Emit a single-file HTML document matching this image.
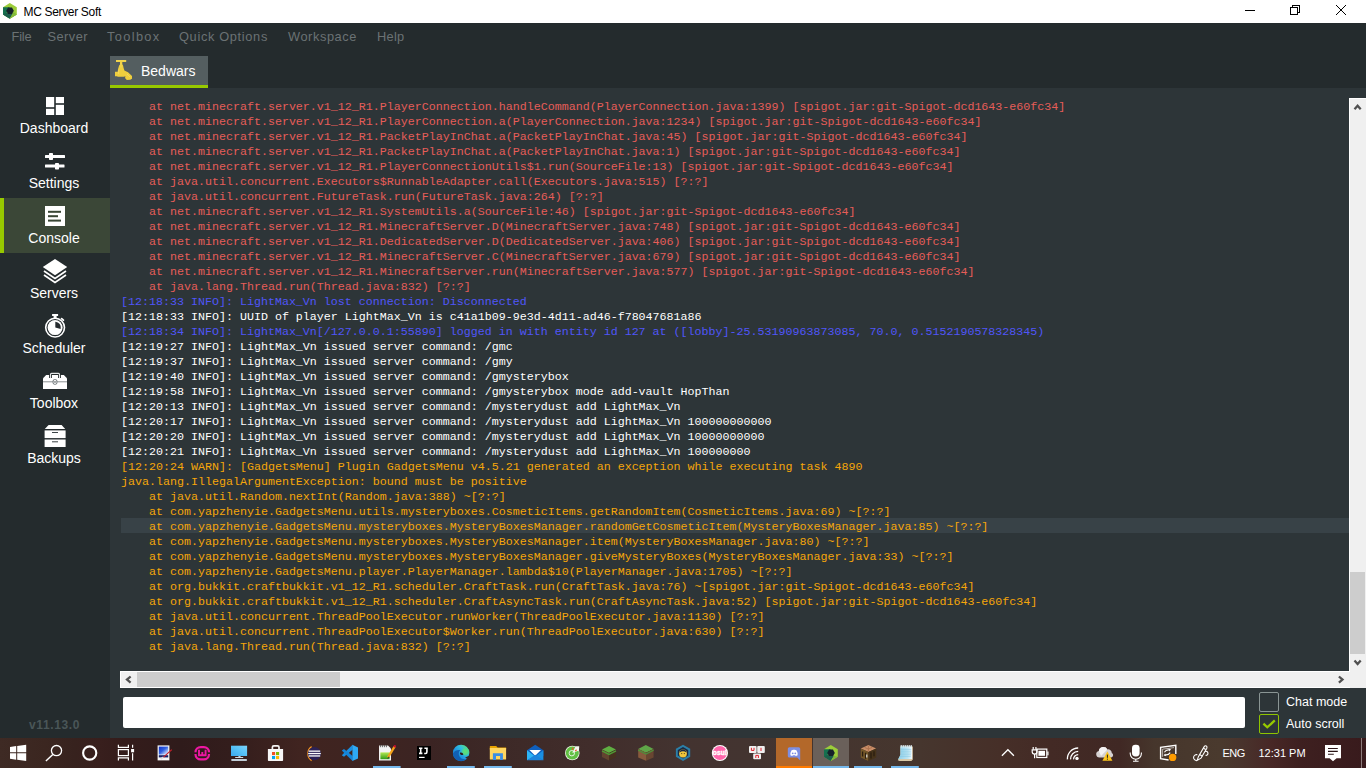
<!DOCTYPE html>
<html>
<head>
<meta charset="utf-8">
<title>MC Server Soft</title>
<style>
*{box-sizing:border-box;margin:0;padding:0}
html,body{width:1366px;height:768px;overflow:hidden;background:#242b2d;font-family:"Liberation Sans",sans-serif}
#root{position:relative;width:1366px;height:768px;overflow:hidden;background:#242b2d}
.abs{position:absolute}
/* title bar */
#titlebar{position:absolute;left:0;top:0;width:1366px;height:23px;background:#fff}
#title{position:absolute;left:23.5px;top:5px;font-size:12px;line-height:14px;color:#000;letter-spacing:-0.33px;white-space:nowrap}
/* menu */
#menubar{position:absolute;left:0;top:23px;width:1366px;height:27px;background:#242b2d}
.mi{position:absolute;top:6px;font-size:12.8px;line-height:15px;color:#6b7274;white-space:nowrap}
/* sidebar */
#sidebar{position:absolute;left:0;top:50px;width:110px;height:688px;background:#242b2d}
.sb{position:absolute;left:0;width:110px;height:55px}
.sb .lbl{position:absolute;left:0;width:108px;top:32px;text-align:center;font-size:14px;line-height:16px;color:#fff;white-space:nowrap}
.sb svg{position:absolute}
.sb.act{background:#3b4737}
.sb.act:before{content:"";position:absolute;left:0;top:0;width:4px;height:55px;background:#97c900}
#ver{position:absolute;left:29px;top:718px;font-size:12px;font-weight:bold;color:#4a5658;line-height:14px;letter-spacing:0.62px;white-space:nowrap}
/* tab */
#tab{position:absolute;left:110px;top:56px;width:98px;height:29px;background:#545e60}
#tabline{position:absolute;left:110px;top:85px;width:98px;height:3px;background:#97c900}
#tabtxt{position:absolute;left:141px;top:63px;font-size:14px;line-height:16px;color:#fff;white-space:nowrap}
/* console */
#panel{position:absolute;left:110px;top:88px;width:1256px;height:650px;background:#2d3538}
#con{position:absolute;left:121px;top:100px;width:1228px;height:573px;overflow:hidden;font-family:"Liberation Mono",monospace;font-size:11.6667px;line-height:15px;color:#fff}
#con div{height:15px;white-space:pre}
.r{color:#e65d58}.b{color:#5056f8}.w{color:#fff}.o{color:#f5a60a}
#hlbar{position:absolute;left:121px;top:518px;width:1228px;height:15px;background:#384247}
#vs{position:absolute;left:1349px;top:98px;width:17px;height:590px;background:#f0f0f0;border-left:1px solid #fff;border-top:1px solid #fff}
#hs{position:absolute;left:120px;top:671px;width:1230px;height:17px;background:#f0f0f0;border:1px solid #fff;border-right:none}
#vthumb{position:absolute;left:1350px;top:572px;width:15px;height:82px;background:#cdcdcd}
#hthumb{position:absolute;left:137px;top:672px;width:203px;height:15px;background:#cdcdcd}
/* input */
#cmd{position:absolute;left:123px;top:697px;width:1122px;height:31px;background:#fff;border-radius:2px}
.cb{position:absolute;left:1259px;width:20px;height:20px;border-radius:2px}
.cbl{position:absolute;left:1286px;font-size:12.5px;line-height:15px;color:#fff;white-space:nowrap}
/* taskbar */
.tt{position:absolute;top:8px;font-size:11px;line-height:14px;color:#fff;white-space:nowrap}
#taskbar{position:absolute;left:0;top:738px;width:1366px;height:30px;background:linear-gradient(90deg,#3e2a24 0.00%,#3b2620 3.29%,#37221e 5.49%,#381f1d 7.32%,#341c1b 9.15%,#2f1b1b 13.18%,#331d1c 16.84%,#402420 21.96%,#3e2421 27.82%,#3b2423 31.48%,#3d2927 36.60%,#412d2b 43.19%,#433330 49.78%,#433430 54.90%,#46362e 67.35%,#462f28 73.21%,#432a25 76.87%,#402824 81.99%,#46362c 84.48%,#4a3a2e 89.31%,#49342d 90.78%,#482826 92.97%,#3e2020 95.17%,#381a1c 100.00%)}
</style>
</head>
<body>
<div id="root">
<div id="titlebar">
<svg class="abs" style="left:0;top:0" width="24" height="23" viewBox="0 0 24 23">
<polygon points="9.8,3 16.8,7.2 16.8,14.6 9.8,18.8 3,14.6 3,7.2" fill="#9ccd3a"/>
<polygon points="3,7.2 9.8,7.2 6,14 9.8,18.8 3,14.6" fill="#15704f"/>
<polygon points="3,14.6 6.2,13 13,13.6 9.8,18.8" fill="#1c5f4c"/>
<polygon points="9.8,18.8 13.4,12 16.8,14.6" fill="#7fb83c"/>
<polygon points="9.8,18.8 13,13.6 16.8,14.6 16.8,14.6" fill="#84bb3c"/>
<polygon points="8,7.4 12,7.4 13.8,10.8 12,14 8,14 6.2,10.8" fill="#15222b"/>
</svg>
<svg class="abs" style="left:1226px;top:0" width="140" height="23" viewBox="0 0 140 23" fill="none" stroke="#000" stroke-width="1" shape-rendering="crispEdges">
<path d="M19 10.5H29"/>
<path d="M64.5 7.5h7v7h-7z M66.5 7.5v-2h7v7h-2"/>
</svg>
<svg class="abs" style="left:1326px;top:0" width="40" height="23" viewBox="0 0 40 23" fill="none" stroke="#000" stroke-width="1">
<path d="M10 5L20 15M20 5L10 15"/>
</svg>
</div>
<div id="title">MC Server Soft</div>
<div id="menubar">
<span class="mi" style="left:11.5px;letter-spacing:-0.15px">File</span>
<span class="mi" style="left:47.5px;letter-spacing:0.47px">Server</span>
<span class="mi" style="left:107px;letter-spacing:1.350px">Toolbox</span>
<span class="mi" style="left:179px;letter-spacing:0.66px">Quick Options</span>
<span class="mi" style="left:288px;letter-spacing:0.58px">Workspace</span>
<span class="mi" style="left:377px;letter-spacing:0.3px">Help</span>
</div>
<div id="sidebar">
<div class="sb" style="top:38px"><svg style="left:46px;top:9px" width="18" height="18" viewBox="0 0 18 18" fill="#fff"><rect x="0" y="0" width="8.200" height="10.200"/><rect x="0" y="11.800" width="8.200" height="6.200"/><rect x="9.800" y="0" width="8.200" height="6.200"/><rect x="9.800" y="7.800" width="8.200" height="10.200"/></svg><div class="lbl">Dashboard</div></div>
<div class="sb" style="top:93px"><svg style="left:44px;top:8px" width="24" height="20" viewBox="0 0 24 20" fill="#fff"><rect x="1" y="4" width="20" height="3" rx="0.5"/><rect x="5" y="2" width="4" height="7" rx="0.7"/><rect x="1" y="13.5" width="19.5" height="3" rx="0.5"/><rect x="11" y="12" width="4" height="6.4" rx="0.7"/></svg><div class="lbl">Settings</div></div>
<div class="sb act" style="top:148px"><svg style="left:45px;top:8px" width="20" height="20" viewBox="0 0 20 20"><rect width="20" height="20" fill="#fff"/><rect x="3" y="4.8" width="13" height="2" fill="#394634"/><rect x="3" y="9.2" width="10" height="2" fill="#394634"/><rect x="3" y="13.6" width="13" height="2" fill="#394634"/></svg><div class="lbl">Console</div></div>
<div class="sb" style="top:203px"><svg style="left:42px;top:5px" width="26" height="26" viewBox="0 0 26 26"><polygon points="13,1 25.2,9 13,17.2 0.8,9" fill="#fff"/><path d="M2 13L13 20.4L24 13M2 17L13 24.4L24 17" fill="none" stroke="#fff" stroke-width="1.7"/></svg><div class="lbl">Servers</div></div>
<div class="sb" style="top:258px"><svg style="left:43px;top:5px" width="24" height="27" viewBox="0 0 24 27"><circle cx="12.1" cy="14.6" r="9.4" fill="none" stroke="#fff" stroke-width="1.6"/><circle cx="12.1" cy="14.6" r="7.5" fill="#fff"/><path d="M12.3 14.4V8.8A5.8 5.8 0 0 1 17.7 16Z" fill="#252b2e"/><rect x="9.1" y="1" width="6" height="2" fill="#fff"/><rect x="10.6" y="1" width="3" height="4.4" fill="#fff"/><path d="M18.6 5.6L20.4 7.2" stroke="#fff" stroke-width="1.8" stroke-linecap="round"/></svg><div class="lbl">Scheduler</div></div>
<div class="sb" style="top:313px"><svg style="left:42px;top:8px" width="26" height="20" viewBox="0 0 26 20"><path d="M4.200 4h17.600L25 7.200V18H1V7.200Z" fill="#fff"/><path d="M8.500 7V3.400Q8.500 2.400 9.500 2.400H16.500Q17.500 2.400 17.500 3.400V7" fill="none" stroke="#242b2d" stroke-width="2.800"/><path d="M8.500 7.200V3.400Q8.500 2.400 9.500 2.400H16.500Q17.500 2.400 17.500 3.400V7.200" fill="none" stroke="#e4e7e7" stroke-width="1.100"/><rect x="1" y="10.300" width="24" height="1" fill="#8a9092"/><rect x="11.100" y="8.500" width="3.800" height="4.800" rx="1.500" fill="#fff" stroke="#6e7577" stroke-width="1"/><rect x="12.500" y="9.900" width="1" height="2" fill="#4a5254"/></svg><div class="lbl">Toolbox</div></div>
<div class="sb" style="top:368px"><svg style="left:43px;top:5px" width="24" height="26" viewBox="0 0 24 26"><polygon points="5.6,1.9 18.6,1.9 22.2,6 1.8,6" fill="#fff"/><rect x="1.6" y="7.4" width="21" height="7.7" fill="#fff"/><rect x="1.6" y="16.5" width="21" height="7.5" fill="#fff"/><rect x="9" y="9" width="6" height="1" fill="#3c4447"/><rect x="9" y="18.3" width="6" height="1" fill="#3c4447"/></svg><div class="lbl">Backups</div></div>
</div>
<div id="ver">v11.13.0</div>
<div id="tab"><svg class="abs" style="left:0;top:0" width="30" height="29" viewBox="0 0 30 29"><path d="M6 4h10.2v2.1h-3.9v2.2l.7 1 .6 2.7.8 2.4 3.6 1.8 4 3.8v2.7l-1.8 1-3.4.3-1.8-2 .5-1.6-1-.1v.5h-6.5l-1.2-.5h-1.8v-4.5h2.7l.3-2.6 1.1-3.8.9-1v-2.3H6z" fill="#efcf3e"/><path d="M6.2 4.9h9.8M11 6.5v5M8.8 14l-.4 4M17 18l3 3" stroke="#f7e488" stroke-width="0.8" fill="none" opacity="0.55"/></svg></div><div id="tabline"></div><div id="tabtxt">Bedwars</div>
<div id="panel"></div>
<div id="hlbar"></div>
<div id="con">
<div class="r">    at net.minecraft.server.v1_12_R1.PlayerConnection.handleCommand(PlayerConnection.java:1399) [spigot.jar:git-Spigot-dcd1643-e60fc34]</div>
<div class="r">    at net.minecraft.server.v1_12_R1.PlayerConnection.a(PlayerConnection.java:1234) [spigot.jar:git-Spigot-dcd1643-e60fc34]</div>
<div class="r">    at net.minecraft.server.v1_12_R1.PacketPlayInChat.a(PacketPlayInChat.java:45) [spigot.jar:git-Spigot-dcd1643-e60fc34]</div>
<div class="r">    at net.minecraft.server.v1_12_R1.PacketPlayInChat.a(PacketPlayInChat.java:1) [spigot.jar:git-Spigot-dcd1643-e60fc34]</div>
<div class="r">    at net.minecraft.server.v1_12_R1.PlayerConnectionUtils$1.run(SourceFile:13) [spigot.jar:git-Spigot-dcd1643-e60fc34]</div>
<div class="r">    at java.util.concurrent.Executors$RunnableAdapter.call(Executors.java:515) [?:?]</div>
<div class="r">    at java.util.concurrent.FutureTask.run(FutureTask.java:264) [?:?]</div>
<div class="r">    at net.minecraft.server.v1_12_R1.SystemUtils.a(SourceFile:46) [spigot.jar:git-Spigot-dcd1643-e60fc34]</div>
<div class="r">    at net.minecraft.server.v1_12_R1.MinecraftServer.D(MinecraftServer.java:748) [spigot.jar:git-Spigot-dcd1643-e60fc34]</div>
<div class="r">    at net.minecraft.server.v1_12_R1.DedicatedServer.D(DedicatedServer.java:406) [spigot.jar:git-Spigot-dcd1643-e60fc34]</div>
<div class="r">    at net.minecraft.server.v1_12_R1.MinecraftServer.C(MinecraftServer.java:679) [spigot.jar:git-Spigot-dcd1643-e60fc34]</div>
<div class="r">    at net.minecraft.server.v1_12_R1.MinecraftServer.run(MinecraftServer.java:577) [spigot.jar:git-Spigot-dcd1643-e60fc34]</div>
<div class="r">    at java.lang.Thread.run(Thread.java:832) [?:?]</div>
<div class="b">[12:18:33 INFO]: LightMax_Vn lost connection: Disconnected</div>
<div class="w">[12:18:33 INFO]: UUID of player LightMax_Vn is c41a1b09-9e3d-4d11-ad46-f78047681a86</div>
<div class="b">[12:18:34 INFO]: LightMax_Vn[/127.0.0.1:55890] logged in with entity id 127 at ([lobby]-25.53190963873085, 70.0, 0.5152190578328345)</div>
<div class="w">[12:19:27 INFO]: LightMax_Vn issued server command: /gmc</div>
<div class="w">[12:19:37 INFO]: LightMax_Vn issued server command: /gmy</div>
<div class="w">[12:19:40 INFO]: LightMax_Vn issued server command: /gmysterybox</div>
<div class="w">[12:19:58 INFO]: LightMax_Vn issued server command: /gmysterybox mode add-vault HopThan</div>
<div class="w">[12:20:13 INFO]: LightMax_Vn issued server command: /mysterydust add LightMax_Vn</div>
<div class="w">[12:20:17 INFO]: LightMax_Vn issued server command: /mysterydust add LightMax_Vn 100000000000</div>
<div class="w">[12:20:20 INFO]: LightMax_Vn issued server command: /mysterydust add LightMax_Vn 10000000000</div>
<div class="w">[12:20:21 INFO]: LightMax_Vn issued server command: /mysterydust add LightMax_Vn 100000000</div>
<div class="o">[12:20:24 WARN]: [GadgetsMenu] Plugin GadgetsMenu v4.5.21 generated an exception while executing task 4890</div>
<div class="o">java.lang.IllegalArgumentException: bound must be positive</div>
<div class="o">    at java.util.Random.nextInt(Random.java:388) ~[?:?]</div>
<div class="o">    at com.yapzhenyie.GadgetsMenu.utils.mysteryboxes.CosmeticItems.getRandomItem(CosmeticItems.java:69) ~[?:?]</div>
<div class="o hl">    at com.yapzhenyie.GadgetsMenu.mysteryboxes.MysteryBoxesManager.randomGetCosmeticItem(MysteryBoxesManager.java:85) ~[?:?]</div>
<div class="o">    at com.yapzhenyie.GadgetsMenu.mysteryboxes.MysteryBoxesManager.item(MysteryBoxesManager.java:80) ~[?:?]</div>
<div class="o">    at com.yapzhenyie.GadgetsMenu.mysteryboxes.MysteryBoxesManager.giveMysteryBoxes(MysteryBoxesManager.java:33) ~[?:?]</div>
<div class="o">    at com.yapzhenyie.GadgetsMenu.player.PlayerManager.lambda$10(PlayerManager.java:1705) ~[?:?]</div>
<div class="o">    at org.bukkit.craftbukkit.v1_12_R1.scheduler.CraftTask.run(CraftTask.java:76) ~[spigot.jar:git-Spigot-dcd1643-e60fc34]</div>
<div class="o">    at org.bukkit.craftbukkit.v1_12_R1.scheduler.CraftAsyncTask.run(CraftAsyncTask.java:52) [spigot.jar:git-Spigot-dcd1643-e60fc34]</div>
<div class="o">    at java.util.concurrent.ThreadPoolExecutor.runWorker(ThreadPoolExecutor.java:1130) [?:?]</div>
<div class="o">    at java.util.concurrent.ThreadPoolExecutor$Worker.run(ThreadPoolExecutor.java:630) [?:?]</div>
<div class="o">    at java.lang.Thread.run(Thread.java:832) [?:?]</div>
</div>
<div id="vs"></div><div id="hs"></div><div id="vthumb"></div><div id="hthumb"></div>
<svg class="abs" style="left:1349px;top:98px" width="17" height="17" viewBox="0 0 17 17"><path d="M5.500 11.200L8.600 7.700L11.700 11.200" fill="none" stroke="#505050" stroke-width="2.300"/></svg>
<svg class="abs" style="left:1349px;top:654px" width="17" height="17" viewBox="0 0 17 17"><path d="M5.500 6.600L8.600 10.100L11.700 6.600" fill="none" stroke="#505050" stroke-width="2.300"/></svg>
<svg class="abs" style="left:120px;top:671px" width="17" height="17" viewBox="0 0 17 17"><path d="M10.600 5.500L7 8.600L10.600 11.700" fill="none" stroke="#505050" stroke-width="2.300"/></svg>
<svg class="abs" style="left:1332px;top:671px" width="17" height="17" viewBox="0 0 17 17"><path d="M6.900 5.500L10.500 8.600L6.900 11.700" fill="none" stroke="#505050" stroke-width="2.300"/></svg>
<div class="cb" style="top:692px;border:1px solid #8a9594"></div>
<div class="cb" style="top:714px;border:1.5px solid #8fc400"><svg class="abs" style="left:-1.5px;top:-1.5px" width="20" height="20" viewBox="0 0 20 20"><path d="M4.400 9.600L8.300 13.300L15.800 6.400" fill="none" stroke="#97c900" stroke-width="2.300"/></svg></div>
<div class="cbl" style="top:695px">Chat mode</div>
<div class="cbl" style="top:717px">Auto scroll</div>
<div id="cmd"></div>
<div id="taskbar">
<svg class="abs" style="left:0;top:0" width="1366" height="30" viewBox="0 738 1366 30">
<defs>
<linearGradient id="gEdge" x1="0" y1="1" x2="1" y2="0"><stop offset="0" stop-color="#1273cc"/><stop offset="0.400" stop-color="#1f95e0"/><stop offset="0.650" stop-color="#30bde0"/><stop offset="0.850" stop-color="#52d98c"/><stop offset="1" stop-color="#6be060"/></linearGradient>
<linearGradient id="gPaint" x1="0" y1="0" x2="1" y2="1"><stop offset="0" stop-color="#1030c8"/><stop offset="0.450" stop-color="#2f5fe0"/><stop offset="0.800" stop-color="#b8cdf8"/><stop offset="1" stop-color="#e8f0ff"/></linearGradient>
<linearGradient id="gMon" x1="0" y1="1" x2="1" y2="0"><stop offset="0" stop-color="#3aa8ee"/><stop offset="0.5" stop-color="#55c1f7"/><stop offset="1" stop-color="#7ad3fb"/></linearGradient>
<linearGradient id="gNpp" x1="0" y1="0" x2="0" y2="1"><stop offset="0" stop-color="#b5e853"/><stop offset="1" stop-color="#2f9a14"/></linearGradient>
<linearGradient id="gMail" x1="0" y1="0" x2="1" y2="1"><stop offset="0" stop-color="#35c0f8"/><stop offset="1" stop-color="#0f73d0"/></linearGradient>
<linearGradient id="gNote" x1="0" y1="0" x2="1" y2="0"><stop offset="0" stop-color="#8fd0ea"/><stop offset="0.7" stop-color="#bfe6f5"/><stop offset="1" stop-color="#f4fbff"/></linearGradient>
<radialGradient id="gEdgeG"><stop offset="0" stop-color="#62e070"/><stop offset="0.600" stop-color="#55dc80" stop-opacity="0.850"/><stop offset="1" stop-color="#40cfa8" stop-opacity="0"/></radialGradient>
</defs>
<!-- highlighted buttons -->
<rect x="776" y="738" width="36" height="30" fill="#b3682a"/>
<rect x="776" y="766" width="36" height="2" fill="#ff7b00"/>
<rect x="813" y="738" width="36" height="30" fill="#6a605a"/>
<g fill="#76b9ed">
<rect x="373" y="766" width="27.6" height="2"/><rect x="447" y="766" width="27.8" height="2"/><rect x="484" y="766" width="27.8" height="2"/>
<rect x="813" y="766" width="36" height="2"/><rect x="854" y="766" width="28" height="2"/><rect x="891" y="766" width="27.8" height="2"/>
</g>
<!-- start -->
<g fill="#fff">
<polygon points="10,747 16.2,746.1 16.2,752.3 10,752.3"/><polygon points="17.2,746 26.2,744.7 26.2,752.3 17.2,752.3"/>
<polygon points="10,753.3 16.2,753.3 16.2,759.7 10,758.8"/><polygon points="17.2,753.3 26.2,753.3 26.2,761.1 17.2,759.8"/>
</g>
<!-- search -->
<circle cx="56.5" cy="750.6" r="5.1" fill="none" stroke="#fff" stroke-width="1.3"/><path d="M52.8 754.4L45.9 761" stroke="#fff" stroke-width="1.4" fill="none"/>
<!-- cortana -->
<circle cx="89.7" cy="753" r="6.6" fill="none" stroke="#fff" stroke-width="2.1"/>
<!-- task view -->
<g fill="none" stroke="#fff" stroke-width="1.200"><rect x="118.400" y="749.600" width="10" height="6"/><path d="M118.400 744.800V747.400H128.400V744.800M118.400 760.400V757.800H128.400V760.400M132.600 744.800V747.800M132.600 753.200V760.400"/></g><rect x="131.100" y="749" width="3" height="3.300" fill="#fff"/>
<!-- paint -->
<rect x="157.600" y="745.400" width="11.800" height="15" fill="#f6f6f6"/><rect x="158.800" y="746.600" width="9.400" height="8" fill="url(#gPaint)"/><rect x="158.800" y="755.200" width="9.400" height="2.200" fill="#14206a"/><path d="M171.800 749.600L163 757.600" stroke="#c8202c" stroke-width="1.200"/><path d="M163.400 757.200L160.600 759.200" stroke="#ddd" stroke-width="1.600"/>
<!-- wamp -->
<rect x="195.500" y="747.100" width="13.500" height="12.300" rx="5.200" fill="none" stroke="#ee17a3" stroke-width="2.200"/><rect x="193.800" y="752.300" width="3.400" height="1.700" fill="#2f1b1b"/><rect x="207.400" y="752.300" width="3.400" height="1.700" fill="#311c1c"/><path d="M199 749.800v5.400h6.600v-5.400M202.300 752v3" fill="none" stroke="#ee17a3" stroke-width="1.900"/>
<!-- monitor -->
<rect x="231" y="745.700" width="16.100" height="10.300" fill="url(#gMon)"/><rect x="238.400" y="756" width="2.200" height="1.400" fill="#c4d0d8"/><rect x="235.200" y="757" width="8" height="1" fill="#d5dde2"/><rect x="231.200" y="759" width="15.800" height="2" rx="0.800" fill="#c2ced8"/>
<!-- store -->
<path d="M272.400 749.600v-2.400q0-1.400 1.400-1.400h3.800q1.400 0 1.400 1.400v2.400" fill="none" stroke="#f4f4f4" stroke-width="1.700"/><path d="M267.900 748.900h15.200v11.300q0 .8-.8.800h-13.600q-.8 0-.8-.8z" fill="#f7f7f7"/><rect x="272" y="752" width="3.100" height="3.100" fill="#f25022"/><rect x="276" y="752" width="3.100" height="3.100" fill="#7fba00"/><rect x="272" y="756" width="3.100" height="3.100" fill="#00a4ef"/><rect x="276" y="756" width="3.100" height="3.100" fill="#ffb900"/>
<!-- eclipse -->
<path d="M311.6 746.6a8.4 8.4 0 0 0 0 14" fill="none" stroke="#f7941e" stroke-width="1.3"/><circle cx="314.4" cy="753.6" r="6.6" fill="#2c2255"/><g fill="#fff"><rect x="308.6" y="750.5" width="11.6" height="1.3"/><rect x="308.2" y="752.9" width="12.6" height="1.3"/><rect x="308.6" y="755.3" width="11.6" height="1.3"/></g>
<!-- vscode -->
<polygon points="352.600,744.800 352.600,749.800 344,756.800 341.800,755.200" fill="#1b8ee0"/><polygon points="352.600,761 352.600,756 344,749 341.800,750.600" fill="#1484d8"/><polygon points="352.400,744.800 358,747.400 358,758.400 352.400,761" fill="#2ea9f4"/>
<!-- notepad++ -->
<path d="M379 745.6h9l3 3V760.6h-12z" fill="#f2f2f2"/><path d="M380.4 745v2.2M382.4 745v2.2M384.4 745v2.2M386.4 745v2.2" stroke="#555" stroke-width="0.9"/><rect x="380.4" y="752.4" width="9.2" height="6.8" fill="url(#gNpp)"/><path d="M394.6 746.6L388 757.4" stroke="#f5a21a" stroke-width="2.3"/><circle cx="394.8" cy="746.2" r="1.2" fill="#c8102e"/><path d="M388.6 756.4L387.2 759L389.6 757.6Z" fill="#333"/>
<!-- intellij -->
<rect x="417" y="746" width="14" height="14" fill="#000"/><path d="M419 748.2h3.4M420.7 748.2v5.2M419 753.4h3.4M424.4 748.2h3.4M426.9 748.2v3.8q0 1.5-1.4 1.5h-1.3" fill="none" stroke="#fff" stroke-width="1.600"/><rect x="419" y="756.800" width="5.600" height="1.200" fill="#fff"/>
<!-- edge -->
<circle cx="461.100" cy="752.900" r="8.200" fill="url(#gEdge)"/><circle cx="465.300" cy="751.800" r="4.600" fill="url(#gEdgeG)"/><path d="M452.900 753.400a8.200 8.200 0 0 0 13.600 5.700q-4.600 1-6.800-2.400t.6-6.600q-5.200-.4-7.400 3.300z" fill="#1160b4"/><path d="M460.200 752.600a1.700 1.700 0 0 0 1.200 2.400q1.200.2 2-.6-.6-2.200-3.200-1.800z" fill="#2e1c1c"/><path d="M469.400 755.600l-4.200 1.800q1.400 1.600 3 1.200a8.200 8.200 0 0 0 1.200-3z" fill="#3c2726"/>
<!-- explorer -->
<path d="M489.800 746.600q0-.6.600-.6h5.800l1.400 1.600h8.500v2h-16.300z" fill="#e9a400"/><rect x="489.800" y="747.900" width="16.300" height="11.500" rx="0.500" fill="#ffd661"/><path d="M492.900 753.200h10v6.800h-2.800v-4h-4.100v4h-3.100z" fill="#3a8ee6"/>
<!-- mail -->
<path d="M527 750.200L535.200 744.800L543.400 750.200V756H527z" fill="#0f5fbd"/><path d="M529.400 750h11.600l-5.800 5.800z" fill="#fff"/><path d="M527 750.200L535.200 756.400L527 760.200z" fill="#2db5f6"/><path d="M543.400 750.200L535.200 756.400L543.400 760.200z" fill="#1a8fe3"/><path d="M527 760.200L535.200 754.800L543.400 760.200z" fill="#1c84dc"/>
<!-- coccoc -->
<circle cx="572.300" cy="753" r="7.300" fill="#e6efe0"/><circle cx="572.300" cy="753" r="6.500" fill="#62c043"/><path d="M572.300 753L575.600 746.200L579.200 746.200L579 750.400Z" fill="#f2f6ee"/><circle cx="571.800" cy="753.200" r="2.700" fill="none" stroke="#f2f6ee" stroke-width="0.900"/><path d="M573 747.600l-.6 2.200M576.600 749.800l-1.400 1.200" stroke="#f0502a" stroke-width="1.200"/>
<!-- grass 1 -->
<polygon points="609,746 616,749.400 609,753 602,749.400" fill="#5fae42"/><polygon points="602,749.400 609,753 609,760.600 602,757" fill="#62442f"/><polygon points="609,753 616,749.400 616,757 609,760.600" fill="#46301f"/><path d="M602 750.800l7 3.600l7-3.600" fill="none" stroke="#4f9a35" stroke-width="1.400"/>
<!-- grass 2 -->
<polygon points="638.200,749 645.800,745 653.600,749 646,752.800" fill="#5fa648"/><polygon points="638.200,749 646,752.800 646,760.800 638.200,757.400" fill="#875a3c"/><polygon points="646,752.800 653.600,749 653.600,757.400 646,760.800" fill="#694631"/><path d="M638.200 750.200l7.800 3.800l7.600-3.800" fill="none" stroke="#4f8c3a" stroke-width="1.300"/>
<!-- hex badge -->
<polygon points="683,744.700 690.200,748.800 690.200,756.800 683,760.900 675.900,756.800 675.900,748.800" fill="#2b7fa8"/><polygon points="683,747 688.200,750 688.200,755.600 683,758.600 677.800,755.600 677.800,750" fill="#1a2a44"/><circle cx="683" cy="753.500" r="3.900" fill="#f0c63c"/><path d="M679.500 752.600q.4-3 3.500-3t3.500 3q-1.600-1.400-3.500-1.400t-3.500 1.400z" fill="#1a2a44"/><rect x="681.200" y="753" width="1" height="1.100" fill="#5a4a20"/><rect x="683.800" y="753" width="1" height="1.100" fill="#5a4a20"/>
<!-- osu -->
<circle cx="719.900" cy="753" r="8.100" fill="#fff"/><circle cx="719.900" cy="753" r="7" fill="#ff66ab"/>
<text x="719.900" y="755.300" font-family="Liberation Sans, sans-serif" font-size="6.700" font-weight="bold" fill="#fff" stroke="#fff" stroke-width="0.350" text-anchor="middle">osu!</text>
<!-- unikey -->
<g fill="#f0f0f0"><rect x="749" y="746" width="7.600" height="7" rx="1"/><rect x="757.200" y="746" width="7.600" height="7" rx="1"/><rect x="753.200" y="753.400" width="7.800" height="5.800" rx="1"/></g><g fill="none" stroke="#e0202a" stroke-width="1"><path d="M751.400 747.800v2.600h2.600v-2.600M761 747.800v3.200M755.800 758v-2.600h2.600v2.600"/></g>
<!-- discord -->
<path d="M789.400 747.200h9.200q1.600 0 1.600 1.600v11.600l-3-2.800h-7.800q-1.600 0-1.600-1.600v-7.200q0-1.600 1.600-1.600z" fill="#7d8ee2"/><path d="M790.400 755.200q-.2-3 1.200-5q1.200-.6 2.400-.4q1.200-.2 2.400.4q1.400 2 1.200 5q-1 .8-2 .8l-.4-.8h-2.400l-.4.800q-1 0-2-.8z" fill="#fff"/><circle cx="792.700" cy="753.300" r="0.900" fill="#7d8ee2"/><circle cx="795.300" cy="753.300" r="0.900" fill="#7d8ee2"/>
<!-- mcss -->
<g transform="translate(821,742.100)"><polygon points="9.800,3 16.800,7.200 16.800,14.600 9.800,18.800 3,14.600 3,7.200" fill="#9ccd3a"/><polygon points="3,7.200 9.800,7.200 6,14 9.800,18.800 3,14.600" fill="#15704f"/><polygon points="3,14.600 6.200,13 13,13.600 9.800,18.800" fill="#1c5f4c"/><polygon points="9.800,18.800 13,13.600 16.800,14.600" fill="#7fb83c"/><polygon points="8,7.400 12,7.400 13.800,10.800 12,14 8,14 6.200,10.800" fill="#15222b"/></g>
<!-- crafting table -->
<polygon points="868.400,745 876.200,748.400 868.400,752 860.800,748.400" fill="#c98e68"/><polygon points="860.800,748.400 868.400,752 868.400,761 860.800,757.400" fill="#75582a"/><polygon points="868.400,752 876.200,748.400 876.200,757.400 868.400,761" fill="#46331a"/><path d="M862.600 751.400v5M865.600 752.800v6M871 752.600v6M874 751.200v5" stroke="#2c1e10" stroke-width="1.300"/><path d="M866.800 754.400v3.200" stroke="#e8e8e8" stroke-width="1.100"/><path d="M864.600 747.400l3.800 1.700 3.800-1.700M868.400 745.800v5" fill="none" stroke="#a86c48" stroke-width="0.800"/>
<!-- notepad -->
<path d="M900.400 746.400h12.400v13l-1.400 1.600h-11.800l-1.800-.8 2.600-5z" fill="#d9c9a8"/><path d="M900.400 746.400h11.600v12.600h-11.400l-2.600.4 2.400-4.600z" fill="url(#gNote)"/><path d="M901.200 745v2.400M903.200 745v2.400M905.200 745v2.400M907.200 745v2.400M909.200 745v2.400M911.200 745v2.400" stroke="#e4f4fa" stroke-width="1.100"/><path d="M900.800 749.400h10.400M900.800 751.200h10.400M900.800 753h10.400M900.600 754.800h10.400M900 756.600h10.800" stroke="#7cc4de" stroke-width="0.500"/>
<!-- tray chevron -->
<path d="M1001.900 755.700L1007.900 749.700L1013.900 755.700" fill="none" stroke="#fff" stroke-width="1.300"/>
<!-- battery -->
<g fill="none" stroke="#fff" stroke-width="1.200"><path d="M1033.200 747v2.600M1035.900 747v2.600"/><path d="M1032.200 749.900h4.800v1.800a2.400 2.400 0 0 1-4.800 0z"/><path d="M1034.600 754v4.200"/><rect x="1036.800" y="749.100" width="10" height="8.400"/></g><rect x="1047.300" y="751.500" width="1.200" height="3.800" fill="#fff"/><rect x="1038.400" y="750.800" width="6.600" height="5" fill="#fff"/>
<!-- wifi -->
<g fill="none" stroke="#fff" stroke-width="1.300"><path d="M1067.400 759.400a10.800 10.800 0 0 1 10.800-11.400" /><path d="M1070.600 759.400a7.600 7.600 0 0 1 7.600-8" /><path d="M1073.600 759.400a4.600 4.600 0 0 1 4.600-4.800"/></g><circle cx="1077" cy="758.400" r="1.700" fill="#fff"/>
<!-- onedrive -->
<path d="M1099.400 757.600a3.400 3.400 0 0 1-.6-6.700a4.600 4.600 0 0 1 8.600-1.500a3.700 3.700 0 0 1 4.400 3.700a2.400 2.400 0 0 1-.6 4.500z" fill="#d6d2d2"/><path d="M1098.800 750.900a4.600 4.600 0 0 1 8.600-1.500l-6.400 6.600z" fill="#f4f2f2"/><path d="M1107.400 751.600l5 9.200h-10z" fill="#fcc41c"/><rect x="1106.900" y="754.600" width="1" height="3.200" fill="#222"/><rect x="1106.900" y="758.600" width="1" height="1.100" fill="#222"/>
<!-- mic -->
<rect x="1132" y="744.800" width="7.600" height="11.600" rx="3.400" fill="#fff"/><path d="M1130.200 752.600v1a5.600 5.600 0 0 0 11.200 0v-1M1135.800 759.200v1.800M1133 761.200h5.600" fill="none" stroke="#fff" stroke-width="1.100"/>
<!-- display -->
<g fill="none" stroke="#fff" stroke-width="1.400"><path d="M1175.800 754V745.200L1160.600 747.400V758.600L1168.600 760"/><path d="M1174 747.600L1162.600 749.200V756.800" stroke-width="0.600"/><path d="M1164.400 752.200q1.800-2.800 5-2.200M1170.200 752.600q-1.800 2.800-5 2.200" stroke-width="1.100"/></g><path d="M1168.400 748.600l2.600.6-1.600 2.200zM1166.200 756.200l-2.600-.6 1.600-2.200z" fill="#fff"/><circle cx="1172.600" cy="757.400" r="3.700" fill="#ff9c00"/>
<!-- pen -->
<g fill="none" stroke="#fff" stroke-width="1.100"><path d="M1197.200 760.400l1.200-3.800 5.800-10q.9-1.300 2.100-.6t.5 2.200l-5.800 10z"/><path d="M1199.600 754.600l2.800 1.600M1203.400 748.200l2.400 1.400"/><path d="M1197.400 754.800a2.900 2.900 0 1 0-.4 5.600M1205 751.400a2.100 2.100 0 1 1 .6 4"/></g>
<!-- notification -->
<path d="M1325 745h16v13.200h-4.400l-3.600 3-3.400-3h-4.600z" fill="#fff"/><path d="M1328 748.500h9.800M1328 751.400h9.800M1328 754.300h5.800" stroke="#2a1416" stroke-width="1.100"/>
<rect x="1361" y="738" width="1" height="30" fill="#8c7a7a"/>
</svg>
<div class="tt" style="left:1222.500px;letter-spacing:-0.5px">ENG</div><div class="tt" style="left:1258.500px">12:31 PM</div>
</div>

</div>
</body>
</html>
